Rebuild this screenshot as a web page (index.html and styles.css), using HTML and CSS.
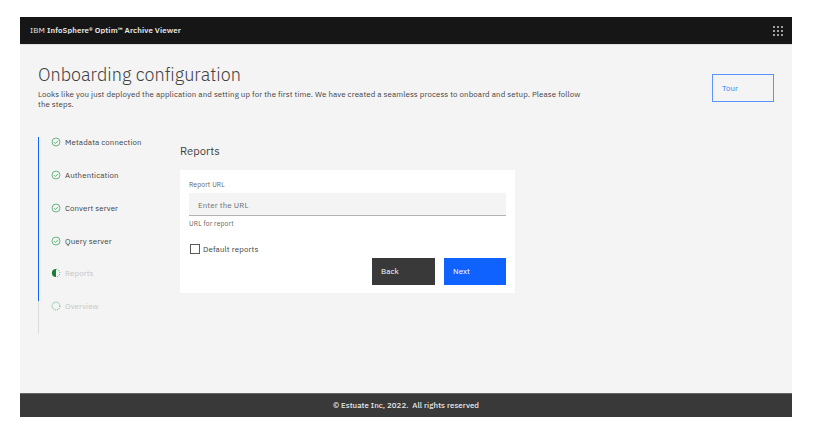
FILE: index.html
```html
<!DOCTYPE html>
<html lang="en">
<head>
<meta charset="utf-8">
<title>Onboarding configuration</title>
<link rel="stylesheet" href="styles.css">
</head>
<body>
<svg class="defs" width="0" height="0">
  <symbol id="done" viewBox="0 0 10 10"><circle cx="5" cy="5" r="4" fill="none" stroke="#5fb077" stroke-width=".9"/><path d="M3 5.1 4.5 6.5 7.1 3.8" fill="none" stroke="#5fb077" stroke-width=".9"/></symbol>
</svg>
<div class="app">
  <header class="topbar">
    <div class="brand"><span class="ibm">IBM</span> InfoSphere® Optim™ Archive Viewer</div>
    <svg class="grid-icon" viewBox="0 0 10 10"><path d="M0 1h2M4 1h2M8 1h2M0 5h2M4 5h2M8 5h2M0 9h2M4 9h2M8 9h2" stroke="#a0a0a0" stroke-width="2"/></svg>
  </header>
  <section class="intro">
    <div>
      <h1>Onboarding configuration</h1>
      <p>Looks like you just deployed the application and setting up for the first time. We have created a seamless process to onboard and setup. Please follow<br>the steps.</p>
    </div>
    <button class="btn tour">Tour</button>
  </section>
  <main class="content">
    <ol class="steps">
      <li><svg><use href="#done"/></svg><span>Metadata connection</span></li>
      <li><svg><use href="#done"/></svg><span>Authentication</span></li>
      <li><svg><use href="#done"/></svg><span>Convert server</span></li>
      <li><svg><use href="#done"/></svg><span>Query server</span></li>
      <li class="dim"><svg viewBox="0 0 10 10"><path d="M5 .9a4.1 4.1 0 0 0 0 8.2z" fill="#198038"/><path d="M5 1.2a3.8 3.8 0 0 1 0 7.6" fill="none" stroke="#4fa868" stroke-width=".9" stroke-dasharray="1.2 1.1"/></svg><span>Reports</span></li>
      <li class="dim"><svg viewBox="0 0 10 10"><circle cx="5" cy="5" r="3.9" fill="none" stroke="#4fa868" stroke-width=".9" stroke-dasharray="1.1 .94"/></svg><span>Overview</span></li>
    </ol>
    <section class="panel">
      <h2>Reports</h2>
      <form class="card">
        <label class="label" for="url">Report URL</label>
        <input id="url" type="text" placeholder="Enter the URL">
        <div class="help">URL for report</div>
        <label class="check"><span class="box"></span><span>Default reports</span></label>
        <div class="actions">
          <button type="button" class="btn back">Back</button>
          <button type="button" class="btn next">Next</button>
        </div>
      </form>
    </section>
  </main>
  <footer class="footer">© Estuate Inc, 2022.&nbsp; All rights reserved</footer>
</div>
</body>
</html>
```
FILE: styles.css
```css
* { box-sizing: border-box; }
body { margin: 0; padding: 17px 26px 18px 20px; background: #fff; font-family: "IBM Plex Sans", Roboto, sans-serif; color: #424242; }
.defs { display: block; }
.app { width: 772px; height: 400px; background: #f4f4f4; display: flex; flex-direction: column; }
.topbar { height: 28px; flex: none; background: #161616; border-bottom: 1px solid #e0e0e0; display: flex; align-items: center; justify-content: space-between; padding: 0 9px 0 10px; }
.brand { color: #e8e8e8; font-size: 7.875px; font-weight: 600; letter-spacing: .11px; padding-bottom: 2px; }
.ibm { font-weight: 400; }
.grid-icon { width: 10px; height: 10px; }
.intro { display: flex; justify-content: space-between; padding: 0 18px; height: 91px; flex: none; }
h1 { margin: 19px 0 0; font-size: 18px; line-height: 22px; font-weight: 300; letter-spacing: .03px; }
p { margin: 3px 0 0; font-size: 7.875px; line-height: 10.4px; letter-spacing: .118px; white-space: nowrap; }
.btn { margin: 0; border: 0; border-radius: 0; font: 7.875px "IBM Plex Sans", Roboto, sans-serif; letter-spacing: .09px; text-align: left; color: #fff; padding: 0 9px 1px; width: 63px; height: 27px; }
.tour { width: 62px; height: 28px; margin-top: 29px; background: transparent; border: 1px solid #5a92ff; color: #3b7bfd; }
.content { display: flex; padding-left: 18px; flex: 1; }
.steps { list-style: none; margin: 1px 0 0; padding: 0 0 0 12px; width: 142px; height: 197px; border-left: 1px solid; border-image: linear-gradient(#0f62fe 0 83%, #dcdcdc 83%) 1; }
.steps li { height: 32.85px; display: flex; align-items: flex-start; font-size: 7.875px; line-height: 11px; letter-spacing: .12px; }
.steps svg { width: 10px; height: 10px; margin-right: 4px; flex: none; }
.steps .dim { color: #c6c6c6; }
.panel { padding-top: 8px; width: 335px; }
h2 { margin: 0 0 12px; font-size: 11.25px; line-height: 14px; font-weight: 400; }
.card { margin: 0; width: 335px; height: 123px; background: #fff; padding: 9px 9px 0; display: flex; flex-direction: column; }
.label { font-size: 6.75px; line-height: 11px; color: #5f5f5f; letter-spacing: .15px; }
input { margin: 3px 0 0; width: 317px; height: 23px; border: 0; border-bottom: 1px solid #b4b4b4; border-radius: 0; background: #f4f4f4; padding: 1px 9px 0; font: 7.875px "IBM Plex Sans", Roboto, sans-serif; letter-spacing: .15px; }
input::placeholder { color: #6f6f6f; opacity: 1; }
.help { font-size: 6.75px; line-height: 9px; margin-top: 3px; color: #5f5f5f; letter-spacing: .15px; }
.check { display: flex; align-items: center; height: 12px; margin-top: 15px; padding-left: 1px; font-size: 7.875px; letter-spacing: .15px; }
.box { width: 10px; height: 10px; border: 1px solid #5a5a5a; margin-right: 3px; }
.actions { display: flex; justify-content: flex-end; gap: 9px; margin-top: 3px; }
.back { background: #393939; }
.next { background: #0f62fe; width: 62px; }
.footer { height: 24px; flex: none; background: #393939; border-top: 1px solid #666; color: #e8e8e8; font-size: 7.875px; font-weight: 500; letter-spacing: .06px; padding-bottom: 1px; display: flex; align-items: center; justify-content: center; }
```
